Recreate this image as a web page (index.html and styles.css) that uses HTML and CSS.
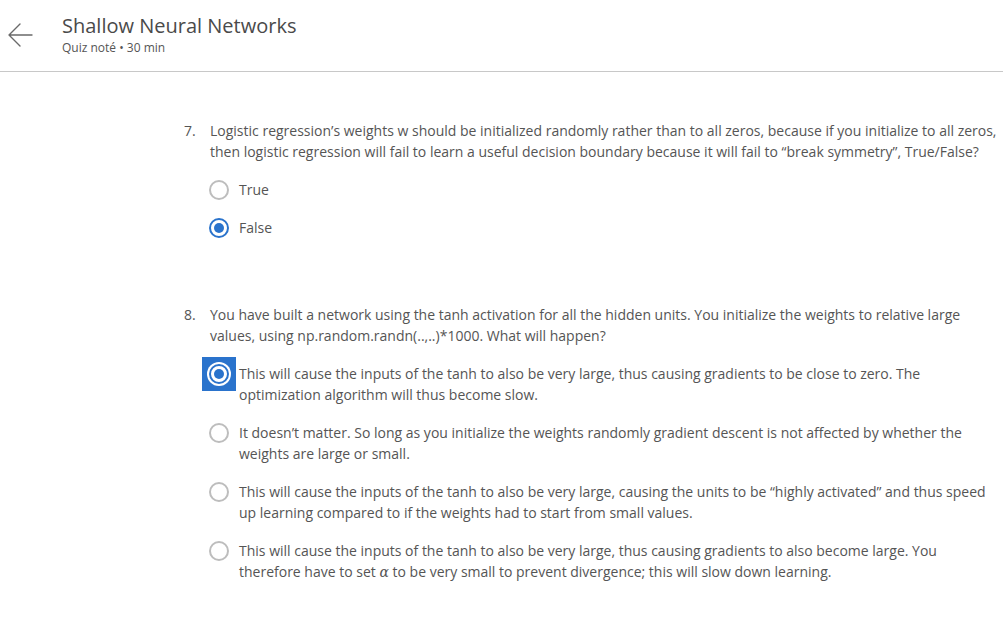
FILE: index.html
```html
<!DOCTYPE html>
<html lang="fr">
<head>
<meta charset="utf-8">
<title>Shallow Neural Networks</title>
<link rel="stylesheet" href="styles.css">
</head>
<body>
<header class="topbar">
  <div class="back">
    <svg width="28" height="26" viewBox="0 0 28 26" aria-hidden="true">
      <path d="M26 13 H3 M14 2 L3 13 L14 24" fill="none" stroke="#6a6a6a" stroke-width="1.4" stroke-linecap="round" stroke-linejoin="round"/>
    </svg>
  </div>
  <div class="heading">
    <h1 class="title">Shallow Neural Networks</h1>
    <div class="subtitle">Quiz noté • 30 min</div>
  </div>
</header>
<main class="quiz">
  <section class="question q7">
    <div class="num">7.</div>
    <div class="qbody">
      <p class="prompt">Logistic regression’s weights w should be initialized randomly rather than to all zeros, because if you initialize to all zeros, then logistic regression will fail to learn a useful decision boundary because it will fail to “break symmetry”, True/False?</p>
      <ul class="options">
        <li class="option"><span class="radio"></span><span class="label">True</span></li>
        <li class="option"><span class="radio checked"></span><span class="label">False</span></li>
      </ul>
    </div>
  </section>
  <section class="question q8">
    <div class="num">8.</div>
    <div class="qbody">
      <p class="prompt">You have built a network using the tanh activation for all the hidden units. You initialize the weights to relative large values, using np.random.randn(..,..)*1000. What will happen?</p>
      <ul class="options">
        <li class="option"><span class="radio-focus"><span class="radio checked"></span></span><span class="label">This will cause the inputs of the tanh to also be very large, thus causing gradients to be close to zero. The optimization algorithm will thus become slow.</span></li>
        <li class="option"><span class="radio"></span><span class="label">It doesn’t matter. So long as you initialize the weights randomly gradient descent is not affected by whether the weights are large or small.</span></li>
        <li class="option"><span class="radio"></span><span class="label">This will cause the inputs of the tanh to also be very large, causing the units to be “highly activated” and thus speed up learning compared to if the weights had to start from small values.</span></li>
        <li class="option"><span class="radio"></span><span class="label">This will cause the inputs of the tanh to also be very large, thus causing gradients to also become large. You therefore have to set <i class="math">α</i> to be very small to prevent divergence; this will slow down learning.</span></li>
      </ul>
    </div>
  </section>
</main>
</body>
</html>
```

FILE: styles.css
```css
* { box-sizing: border-box; }
html, body {
  margin: 0;
  padding: 0;
  background: #fff;
}
body {
  font-family: "Open Sans", "Noto Sans", sans-serif;
  color: #555;
  width: 1003px;
  overflow: hidden;
}
.topbar {
  display: flex;
  height: 72px;
  border-bottom: 1px solid #c8c8c8;
}
.back {
  width: 62px;
  display: flex;
  align-items: center;
  padding-left: 6px;
  padding-bottom: 1px;
}
.back svg { display: block; }
.heading {
  padding-top: 13px;
}
.title {
  margin: 0;
  font-size: 20px;
  line-height: 26px;
  font-weight: 400;
  color: #4a4a4a;
}
.subtitle {
  margin-top: 1px;
  font-size: 12px;
  line-height: 16px;
  color: #555;
}
.quiz {
  padding: 48px 2px 40px 184px;
}
.question {
  display: flex;
  font-size: 14px;
  line-height: 21px;
}
.q8 { margin-top: 66px; }
.num {
  width: 26px;
  flex: none;
}
.qbody { flex: 1; }
.prompt { margin: 0; }
.options {
  list-style: none;
  margin: 17px 0 0 -1px;
  padding: 0;
  display: flex;
  flex-direction: column;
  gap: 17px;
}
.option {
  display: flex;
  align-items: flex-start;
  gap: 10px;
}
.radio {
  flex: none;
  width: 20px;
  height: 20px;
  margin-top: 0.5px;
  border-radius: 50%;
  border: 2px solid #bdbdbd;
  background: #fff;
  position: relative;
}
.radio.checked {
  border-color: #2a73cc;
}
.radio.checked::after {
  content: "";
  position: absolute;
  left: 3px;
  top: 3px;
  width: 10px;
  height: 10px;
  border-radius: 50%;
  background: #2a73cc;
}
.radio-focus {
  flex: none;
  width: 20px;
  height: 20px;
  margin-top: 0.5px;
  background: #2a73cc;
  box-shadow: 0 0 0 7px #2a73cc;
  display: flex;
}
.radio-focus .radio {
  margin-top: 0;
  box-shadow: 0 0 0 2px #fff;
}
.label { flex: 1; }
.math {
  font-family: "DejaVu Serif", "Liberation Serif", serif;
  font-style: italic;
  font-size: 14px;
}
```
